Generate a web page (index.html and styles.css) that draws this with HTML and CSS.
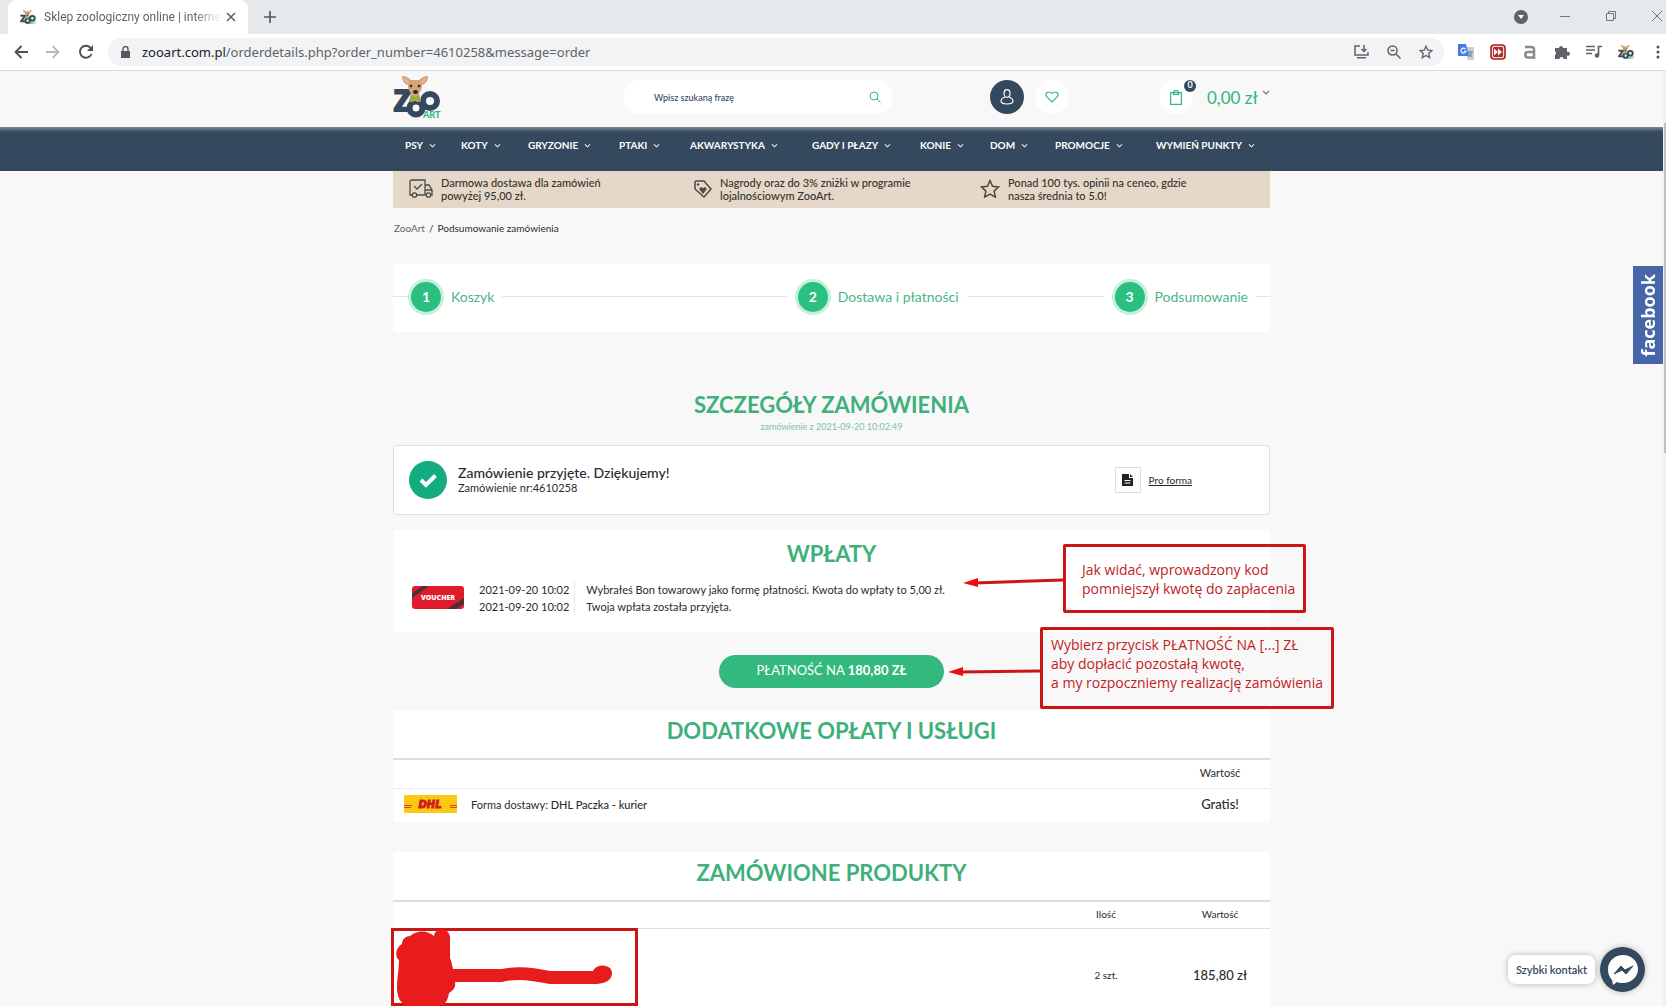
FILE: index.html
```html
<!DOCTYPE html>
<html lang="pl">
<head>
<meta charset="utf-8">
<title>Sklep zoologiczny online | internetowy ZooArt</title>
<link rel="stylesheet" href="styles.css">
</head>
<body>
<svg class="defs" aria-hidden="true">
  <symbol id="logo" viewBox="0 0 48 44">
    <text class="logo-z" x="1" y="36">Z</text>
    <circle cx="37" cy="26" r="7" fill="none" stroke="#34495e" stroke-width="6"/>
    <circle cx="23" cy="33" r="6.500" fill="#f8f8f8" stroke="#34495e" stroke-width="6"/>
    <path d="M9 1c4 0 7 2 9 4h8c2-2 5-4 9-4 0 4-2 8-6 9 0 4-1 6-3 8l2 8H16l2-8c-2-2-3-4-3-8-4-1-6-5-6-9z" fill="#d3a578"/>
    <path d="M11 3c2 0 4 2 5 5-3 0-4-2-5-5zm22 0c-2 0-4 2-5 5 3 0 4-2 5-5z" fill="#e9b9a0"/>
    <circle cx="18" cy="11" r="1.300" fill="#2b2622"/><circle cx="26" cy="11" r="1.300" fill="#2b2622"/>
    <ellipse cx="22.500" cy="17" rx="2.500" ry="2" fill="#2b2622"/>
    <path d="M18 20l4 2 4-2v4l-4 2-4-2z" fill="#8cb82b"/>
    <path d="M16 26l2-3 3 4h-4zm12 0l-2-3-3 4h4z" fill="#bb8a5e"/>
    <text class="logo-art" x="30" y="43">ART</text>
  </symbol>
  <symbol id="chev" viewBox="0 0 8 6"><path d="M1 1l3 3 3-3" fill="none" stroke="currentColor" stroke-width="1.200"/></symbol>
</svg>

<div class="tabstrip">
  <div class="tab">
    <svg class="favicon"><use href="#logo"/></svg>
    <span class="tab-title">Sklep zoologiczny online | interne</span>
    <button class="icon-btn" aria-label="Zamknij kartę"><svg width="10" height="10" viewBox="0 0 10 10"><path d="M1 1l8 8M9 1L1 9" stroke="#5f6368" stroke-width="1.600"/></svg></button>
  </div>
  <button class="icon-btn new-tab" aria-label="Nowa karta"><svg width="12" height="12" viewBox="0 0 12 12"><path d="M6 0v12M0 6h12" stroke="#55595d" stroke-width="1.700"/></svg></button>
  <div class="window-controls">
    <svg class="tab-search" width="14" height="14" viewBox="0 0 14 14"><circle cx="7" cy="7" r="7" fill="#5f6368"/><path d="M4 5h6l-3 4z" fill="#fff"/></svg>
    <button class="icon-btn" aria-label="Minimalizuj"><svg width="10" height="10" viewBox="0 0 10 10"><path d="M0 5.500h10" stroke="#777"/></svg></button>
    <button class="icon-btn" aria-label="Przywróć"><svg width="10" height="10" viewBox="0 0 10 10"><path d="M.5 2.500h7v7h-7zM2.500 2.500v-2h7v7h-2" fill="none" stroke="#777"/></svg></button>
    <button class="icon-btn" aria-label="Zamknij"><svg width="10" height="10" viewBox="0 0 10 10"><path d="M0 0l10 10M10 0L0 10" stroke="#777"/></svg></button>
  </div>
</div>

<div class="toolbar">
  <div class="history">
    <button class="icon-btn" aria-label="Wstecz"><svg width="14" height="14" viewBox="0 0 14 14"><path d="M14 7H2M7.500 1L1.500 7l6 6" fill="none" stroke="#4d5156" stroke-width="1.800"/></svg></button>
    <button class="icon-btn" aria-label="Dalej"><svg width="14" height="14" viewBox="0 0 14 14"><path d="M0 7h12M6.500 1l6 6-6 6" fill="none" stroke="#b6b8ba" stroke-width="1.800"/></svg></button>
    <button class="icon-btn" aria-label="Odśwież"><svg width="16" height="16" viewBox="0 0 16 16"><path d="M13.500 10A6 6 0 1 1 12.500 3.800" fill="none" stroke="#4d5156" stroke-width="1.900"/><path d="M15 1v6H9z" fill="#4d5156"/></svg></button>
  </div>
  <div class="omnibox">
    <svg width="9" height="12" viewBox="0 0 9 12"><path d="M0 5h9v7H0z" fill="#55595d"/><path d="M2 5V3a2.500 2.500 0 0 1 5 0v2" fill="none" stroke="#55595d" stroke-width="1.400"/></svg>
    <span class="url"><span class="host">zooart.com.pl</span>/orderdetails.php?order_number=4610258&amp;message=order</span>
    <span class="omni-icons">
      <svg width="15" height="14" viewBox="0 0 15 14"><path d="M6 1H1v9h13V7M10 0v6M7.500 4L10 6.500 12.500 4" fill="none" stroke="#5f6368" stroke-width="1.500"/><path d="M3 12h9v1.500H3z" fill="#5f6368"/></svg>
      <svg width="14" height="14" viewBox="0 0 14 14"><circle cx="5.500" cy="5.500" r="4.500" fill="none" stroke="#5f6368" stroke-width="1.500"/><path d="M9 9l4.500 4.500M3.500 5.500h4" stroke="#5f6368" stroke-width="1.500"/></svg>
      <svg width="14" height="14" viewBox="0 0 14 14"><path d="M7 1.200l1.700 4 4.300.4-3.300 2.800 1 4.200L7 10.400l-3.700 2.200 1-4.200L1 5.600l4.300-.4z" fill="none" stroke="#5f6368" stroke-width="1.300"/></svg>
    </span>
  </div>
  <div class="extensions">
    <svg viewBox="0 0 16 16"><path d="M6 3h9a1 1 0 0 1 1 1v11a1 1 0 0 1-1 1h-5z" fill="#c9ccd1"/><path d="M0 0h8l3 12H1a1 1 0 0 1-1-1z" fill="#3f7de0"/><path d="M7.500 5A2.500 2.500 0 1 0 8 7H5.800" fill="none" stroke="#fff" stroke-width="1.200"/><path d="M10 8h5M12.500 7v1M11 9l3 4M14 9l-3.500 4" stroke="#5f7fa8"/></svg>
    <svg viewBox="0 0 16 16"><rect x="1" y="1" width="14" height="14" rx="3" fill="#f6dcdc" stroke="#a32323" stroke-width="1.600"/><rect x="3" y="3" width="10" height="10" rx="1" fill="#b52b2b"/><path d="M4 4.500L8 8l-4 3.500zM8 4.500L12 8l-4 3.500z" fill="#fff"/></svg>
    <svg viewBox="-1 -1 16 16"><path d="M2 2h6.500a2.500 2.500 0 0 1 2.500 2.500V14M11 7H5a2.700 2.700 0 0 0 0 5.500h6" fill="none" stroke="#8b8b8b" stroke-width="2.600"/></svg>
    <svg viewBox="-1 -1 16 16"><path d="M0 3h4a2 2 0 1 1 4 0h4v4a2 2 0 1 1 0 3.500V14H8.500a2 2 0 0 0-4 0H0v-4a2 2 0 0 0 0-3.500z" fill="#5f6368"/></svg>
    <svg viewBox="0 -1 16 16"><path d="M0 1.500h9M0 5h9M0 8.500h6M16 1.500h-3.500V10" fill="none" stroke="#5f6368" stroke-width="1.700"/><circle cx="11" cy="10.500" r="2.300" fill="#5f6368"/></svg>
    <svg><use href="#logo"/></svg>
    <svg viewBox="-6 -1 16 16"><circle cx="2" cy="2" r="1.500" fill="#4d5156"/><circle cx="2" cy="7" r="1.500" fill="#4d5156"/><circle cx="2" cy="12" r="1.500" fill="#4d5156"/></svg>
  </div>
</div>

<div class="viewport">
<div class="page">
  <header class="site-header">
    <div class="container header-row">
      <a href="#" class="logo-link" aria-label="ZooArt"><svg width="48" height="44"><use href="#logo"/></svg></a>
      <form class="search">
        <input type="search" placeholder="Wpisz szukaną frazę" aria-label="Wpisz szukaną frazę">
        <button type="button" class="icon-btn" aria-label="Szukaj"><svg width="12" height="12" viewBox="0 0 12 12"><circle cx="5" cy="5" r="4" fill="none" stroke="#2fb77c"/><path d="M8 8l3.500 3.500" stroke="#2fb77c"/></svg></button>
      </form>
      <a href="#" class="round dark account" aria-label="Konto"><svg width="14" height="16" viewBox="0 0 14 16"><ellipse cx="7" cy="4.500" rx="3" ry="3.800" fill="none" stroke="#fff" stroke-width="1.200"/><path d="M5 8c-2.500 1-4 2-4 4 0 2 2.500 3 6 3s6-1 6-3c0-2-1.500-3-4-4" fill="none" stroke="#fff" stroke-width="1.200"/></svg></a>
      <a href="#" class="round" aria-label="Ulubione"><svg width="14" height="12" viewBox="0 0 14 12"><path d="M7 11L1.500 5.500C-.5 2.500 3.500-1 7 2.500c3.500-3.500 7.500 0 5.500 3z" fill="none" stroke="#2fb77c" stroke-width="1.100"/></svg></a>
      <a href="#" class="round cart" aria-label="Koszyk"><svg width="12" height="15" viewBox="0 0 12 15"><path d="M.6 2.600h10.800v11.800H.6z" fill="none" stroke="#2fb77c" stroke-width="1.200"/><path d="M3.500 4.500v-2a2.500 2 0 0 1 5 0v2z" fill="none" stroke="#2fb77c" stroke-width="1.200"/></svg><span class="badge">0</span></a>
      <span class="price">0,00 zł</span>
      <svg class="price-chev" width="8" height="6"><use href="#chev"/></svg>
    </div>
  </header>
  <nav class="main-nav">
    <ul class="container">
      <li><a href="#">PSY <svg><use href="#chev"/></svg></a></li>
      <li><a href="#">KOTY <svg><use href="#chev"/></svg></a></li>
      <li><a href="#">GRYZONIE <svg><use href="#chev"/></svg></a></li>
      <li><a href="#">PTAKI <svg><use href="#chev"/></svg></a></li>
      <li><a href="#">AKWARYSTYKA <svg><use href="#chev"/></svg></a></li>
      <li><a href="#">GADY I PŁAZY <svg><use href="#chev"/></svg></a></li>
      <li><a href="#">KONIE <svg><use href="#chev"/></svg></a></li>
      <li><a href="#">DOM <svg><use href="#chev"/></svg></a></li>
      <li><a href="#">PROMOCJE <svg><use href="#chev"/></svg></a></li>
      <li><a href="#">WYMIEŃ PUNKTY <svg><use href="#chev"/></svg></a></li>
    </ul>
  </nav>

  <main class="container">
    <div class="benefits">
      <div class="benefit"><svg width="24" height="19" viewBox="0 0 24 19"><path d="M3 16H1V3a2 2 0 0 1 2-2h13v15H8M16 6h4l3 5v5h-1M16 11h7M5 7l3 3 5-5" fill="none" stroke="#4a4a45" stroke-width="1.300"/><circle cx="5.500" cy="16" r="2.200" fill="none" stroke="#4a4a45" stroke-width="1.300"/><circle cx="19.500" cy="16" r="2.200" fill="none" stroke="#4a4a45" stroke-width="1.300"/></svg><span>Darmowa dostawa dla zamówień<br>powyżej 95,00 zł.</span></div>
      <div class="benefit"><svg width="18" height="18" viewBox="0 0 18 18"><path d="M1 2a1 1 0 0 1 1-1h8l7 8-7 8-9-8z" fill="none" stroke="#4a4a45" stroke-width="1.500"/><circle cx="4" cy="4.500" r="1.200" fill="#4a4a45"/><path d="M9 14L5.500 9.500C5 7 8 6.500 9 8.500c1-2 4-1.500 3.500 1z" fill="#4a4a45"/></svg><span>Nagrody oraz do 3% zniżki w programie<br>lojalnościowym ZooArt.</span></div>
      <div class="benefit"><svg width="20" height="19" viewBox="0 0 20 19"><path d="M10 1.500l2.600 5.700 6 .7-4.500 4.200 1.300 6L10 15l-5.400 3.100 1.300-6L1.400 7.900l6-.7z" fill="none" stroke="#4a4a45" stroke-width="1.500"/></svg><span>Ponad 100 tys. opinii na ceneo, gdzie<br>nasza średnia to 5.0!</span></div>
    </div>

    <div class="breadcrumb"><a href="#">ZooArt</a><span>/</span><span>Podsumowanie zamówienia</span></div>

    <ol class="steps card">
      <li class="step"><span class="num">1</span>Koszyk</li>
      <li class="step grow-a"><span class="num">2</span>Dostawa i płatności</li>
      <li class="step grow-b"><span class="num">3</span>Podsumowanie</li>
    </ol>

    <h1>SZCZEGÓŁY ZAMÓWIENIA</h1>
    <p class="order-date">zamówienie z 2021-09-20 10:02:49</p>

    <section class="order card">
      <svg width="38" height="38" viewBox="0 0 38 38"><circle cx="19" cy="19" r="19" fill="#15ab80"/><path d="M12 19l5 5 9.500-9.500" fill="none" stroke="#fff" stroke-width="4"/></svg>
      <div class="order-text"><strong>Zamówienie przyjęte. Dziękujemy!</strong><span>Zamówienie nr:4610258</span></div>
      <a href="#" class="proforma"><span class="doc"><svg width="11" height="12" viewBox="0 0 11 12"><path d="M0 0h7v4h4v8H0z" fill="#222"/><path d="M8 0l3 3H8z" fill="#222"/><path d="M2.500 6.500h6M2.500 9h6" stroke="#fff"/></svg></span><span class="proforma-label">Pro forma</span></a>
    </section>

    <section class="payments card">
      <h2>WPŁATY</h2>
      <div class="payment-row">
        <svg class="voucher" width="52" height="23" viewBox="0 0 52 23"><defs><clipPath id="vc"><rect width="52" height="23" rx="3"/></clipPath></defs><g clip-path="url(#vc)"><rect width="52" height="23" fill="#e01b2d"/><path d="M0 7L11 0h6L0 12zM35 23L52 12v6l-8 5z" fill="#4a3234"/></g><text x="26" y="14" text-anchor="middle" class="voucher-text">VOUCHER</text></svg>
        <div class="dates">2021-09-20 10:02<br>2021-09-20 10:02</div>
        <div class="messages">Wybrałeś Bon towarowy jako formę płatności. Kwota do wpłaty to 5,00 zł.<br>Twoja wpłata została przyjęta.</div>
      </div>
    </section>

    <button class="pay">PŁATNOŚĆ NA <b>180,80 ZŁ</b></button>

    <section class="card extras">
      <h2>DODATKOWE OPŁATY I USŁUGI</h2>
      <table>
        <thead><tr><th></th><th class="col-value">Wartość</th></tr></thead>
        <tbody><tr>
          <td><div class="delivery"><svg width="53" height="18" viewBox="0 0 53 18"><rect width="53" height="18" fill="#fbc911"/><path d="M0 10.500h8M0 12.500h7M46 10.500h7M46 12.500h7" stroke="#d8451b"/><text x="26" y="13" text-anchor="middle" class="dhl-text">DHL</text></svg><span>Forma dostawy: <b>DHL Paczka - kurier</b></span></div></td>
          <td class="col-value amount">Gratis!</td>
        </tr></tbody>
      </table>
    </section>

    <section class="card products">
      <h2>ZAMÓWIONE PRODUKTY</h2>
      <table>
        <thead><tr><th></th><th class="col-qty">Ilość</th><th class="col-value">Wartość</th></tr></thead>
        <tbody><tr>
          <td class="product-cell"><svg class="redacted" width="247" height="79" viewBox="0 0 247 79"><rect x="1.500" y="1.500" width="244" height="75" fill="none" stroke="#cb1616" stroke-width="3"/><path d="M8 32C4 29 4 20 11 16c0-5 4-8 8-8 7-6 17-6 24 0 1-9 15-9 16 1v21c2 5 2 7 3 11h49c14-3 30-2 48 2h43c5-9 20-6 19 3-1 8-10 10-18 10h-44c-18-3-32-6-48-2H64c1 5-1 8-6 11-1 7-4 12-9 13H20C9 78 6 68 6 59c0-9 2-18 2-27z" fill="#e81c1c"/></svg></td>
          <td class="col-qty">2 szt.</td>
          <td class="col-value amount">185,80 zł</td>
        </tr></tbody>
      </table>
    </section>

    <div class="note note-code">
      <svg width="100" height="12" viewBox="0 0 100 12"><path d="M12 8L100 5" stroke="#cb1616" stroke-width="3"/><path d="M0 8l15-5v9z" fill="#ee0d0d"/></svg>
      <p>Jak widać, wprowadzony kod<br>pomniejszył kwotę do zapłacenia</p>
    </div>
    <div class="note note-pay">
      <svg width="92" height="12" viewBox="0 0 92 12"><path d="M12 7L92 6" stroke="#cb1616" stroke-width="3"/><path d="M0 7l15-5v9z" fill="#ee0d0d"/></svg>
      <p>Wybierz przycisk PŁATNOŚĆ NA [...] ZŁ<br>aby dopłacić pozostałą kwotę,<br>a my rozpoczniemy realizację zamówienia</p>
    </div>
  </main>

  <a href="#" class="facebook"><span>facebook</span></a>
  <div class="chat">
    <span class="chat-label">Szybki kontakt</span>
    <button class="chat-btn" aria-label="Szybki kontakt"><svg width="30" height="32" viewBox="0 0 30 32"><path d="M15 1c8 0 15 6 15 14s-7 14-15 14c-2 0-4 0-6-1l-4 3-1-5C1 23 0 19 0 15 0 7 7 1 15 1z" fill="#fff"/><path d="M6 20l7-8 4 4 8-4-7 8-4-4z" fill="#34495e" stroke="#34495e"/></svg></button>
  </div>
</div>
<div class="scrollbar"><div class="thumb"></div></div>
</div>
</body>
</html>
```

FILE: styles.css
```css
* { box-sizing: border-box; }
body {
  margin: 0;
  height: 100vh;
  display: flex;
  flex-direction: column;
  overflow: hidden;
  background: #f8f8f8;
  color: #2b2b2b;
  font: 11px/17px Lato, "Liberation Sans", sans-serif;
}
button, input { font: inherit; color: inherit; }
a { color: inherit; text-decoration: none; }
svg { display: block; flex: none; }
.defs { display: none; }
.logo-z { font: 900 28px Lato, sans-serif; fill: #34495e; stroke: #34495e; stroke-width: 2px; }
.logo-art { font: 900 9px Lato, sans-serif; fill: #2fb77c; }
.icon-btn { display: flex; padding: 0; border: 0; background: none; }

/* browser window */
.tabstrip { display: flex; align-items: center; height: 34px; padding-left: 8px; background: #e5e9eb; }
.tab {
  display: flex;
  align-items: center;
  width: 240px;
  height: 34px;
  padding: 0 12px;
  background: #fff;
  border-radius: 8px 8px 0 0;
}
.favicon { width: 16px; height: 16px; }
.tab-title {
  flex: 1;
  margin: 0 5px 0 8px;
  white-space: nowrap;
  font: 12px/16px Roboto, sans-serif;
  color: #5f6368;
  -webkit-mask-image: linear-gradient(90deg, #000 85%, transparent);
  mask-image: linear-gradient(90deg, #000 85%, transparent);
}
.new-tab { margin-left: 16px; }
.window-controls { display: flex; align-items: center; gap: 36px; margin-left: auto; padding-right: 4px; }
.window-controls svg { margin-bottom: 2px; }
.window-controls .tab-search { margin: 0 -4px 0 0; }
.toolbar {
  display: flex;
  align-items: center;
  gap: 14px;
  height: 37px;
  padding-left: 14px;
  background: #fff;
  border-bottom: 1px solid #d9dbdd;
}
.history { display: flex; align-items: center; gap: 18px; }
.omnibox {
  flex: 1;
  display: flex;
  align-items: center;
  gap: 12px;
  height: 28px;
  padding: 0 11px 0 13px;
  border-radius: 14px;
  background: #f1f3f4;
}
.url { flex: 1; font: 13px/20px "Noto Sans", sans-serif; color: #5f6368; }
.host { color: #202124; }
.omni-icons { display: flex; gap: 18px; }
.extensions { display: flex; align-items: center; gap: 16px; }
.extensions svg { width: 16px; height: 16px; }

/* shop page */
.viewport { flex: 1; display: flex; min-height: 0; }
.page { position: relative; flex: 1; overflow: hidden; }
.scrollbar { width: 3px; padding-top: 52px; background: #f1f1f1; }
.thumb { height: 330px; margin-left: 1px; background: #c1c1c1; }
.container { position: relative; width: 100%; max-width: 877px; margin: 0 auto; }

.header-row { display: flex; align-items: center; height: 56px; padding-bottom: 4px; }
.logo-link { width: 230px; }
.search {
  display: flex;
  align-items: center;
  width: 270px;
  height: 34px;
  padding: 0 12px 0 31px;
  border-radius: 17px;
  background: #fff;
}
.search input { flex: 1; min-width: 0; padding: 0; border: 0; outline: 0; background: none; font-size: 9px; font-weight: 500; color: #34495e; }
.search input::placeholder { color: #34495e; opacity: 1; }
.round { position: relative; display: flex; align-items: center; justify-content: center; width: 34px; height: 34px; border-radius: 50%; background: #fff; }
.dark { background: #34495e; }
.account { margin: 0 11px 0 97px; }
.cart { margin-left: 90px; }
.badge {
  position: absolute;
  top: 0;
  right: -3px;
  width: 12px;
  height: 12px;
  border-radius: 50%;
  background: #34495e;
  color: #fff;
  font: 700 9px/10px Lato, sans-serif;
  text-align: center;
}
.price { margin-left: 14px; font-size: 17px; color: #2fb77c; }
.price-chev { margin: 0 0 8px auto; color: #777; }

.main-nav { height: 44px; background: linear-gradient(#7c8997, #34495e 5px); }
.main-nav ul {
  display: grid;
  grid-template-columns: 56fr 67fr 91fr 71fr 122fr 108fr 70fr 65fr 101fr 114fr;
  padding: 10px 0 0 12px;
  list-style: none;
}
.main-nav a { display: flex; align-items: center; gap: 6px; color: #fff; font-weight: 700; font-size: 10px; white-space: nowrap; }
.main-nav svg { width: 7px; height: 6px; }

.benefits {
  display: grid;
  grid-template-columns: 285fr 286fr 290fr;
  align-items: center;
  height: 37px;
  padding: 0 0 2px 16px;
  background: #e6d8c8;
}
.benefit { display: flex; align-items: center; gap: 8px; font-size: 11px; line-height: 13px; font-weight: 500; color: #33332f; }

.breadcrumb { display: flex; gap: 4px; padding: 12px 0 0 1px; height: 56px; font-size: 10px; }
.breadcrumb a { color: #666; }

.card { background: #fff; border-radius: 4px; }
.steps { display: flex; height: 68px; margin: 0; padding: 0 0 3px; list-style: none; }
.step { display: flex; align-items: center; font-size: 14px; color: #4bb586; white-space: nowrap; }
.step::before { content: ""; height: 1px; width: 15px; background: #e4e6e6; }
.step::after { content: ""; width: 8px; }
.step:last-child::after { height: 1px; width: 15px; margin-left: 7px; background: #e4e6e6; }
.grow-a { flex: 285 1 auto; }
.grow-b { flex: 129 1 auto; }
.grow-a::before, .grow-b::before { flex: 1; margin-right: 8px; }
.num {
  width: 36px;
  height: 36px;
  margin-right: 7px;
  border: 3px solid #c5f1dc;
  border-radius: 50%;
  background: #2bc07f;
  color: #fff;
  font-weight: 700;
  line-height: 29px;
  text-align: center;
}

h1, h2 { margin: 0; color: #3fb07b; font-size: 22px; line-height: 28px; font-weight: 700; text-align: center; }
h1 { margin-top: 59px; }
.order-date { margin: 0; padding: 0 0 11px; font-size: 9px; line-height: 15px; color: #7cc4a0; text-align: center; }

.order { display: flex; align-items: center; height: 70px; padding: 0 77px 0 15px; border: 1px solid #dcdedf; }
.order-text { display: flex; flex-direction: column; margin-left: 11px; line-height: 15px; }
.order-text strong { font-size: 14px; font-weight: 500; }
.proforma { display: flex; align-items: center; gap: 8px; margin-left: auto; font-size: 10px; }
.doc { display: flex; align-items: center; justify-content: center; width: 26px; height: 26px; border: 1px solid #dcdedf; }
.proforma-label { text-decoration: underline; }

.payments { height: 102px; margin-top: 15px; padding-top: 10px; }
.payment-row { display: flex; align-items: center; margin-top: 13px; padding-left: 19px; }
.voucher { margin-bottom: 2px; }
.voucher-text { font: 900 7px "Open Sans", sans-serif; fill: #fff; }
.dates { margin-left: 15px; padding-right: 5px; border-right: 1px solid #e8e8e8; }
.messages { margin-left: 11px; }

.pay {
  display: block;
  width: 225px;
  height: 33px;
  margin: 23px auto 22px;
  padding: 0 0 3px;
  border: 0;
  border-radius: 17px;
  background: #33b97d;
  color: #fff;
  font-size: 13px;
}

.extras { height: 112px; padding-top: 7px; }
.products { height: 190px; margin-top: 30px; padding-top: 7px; }
table { width: 100%; margin-top: 13px; border-collapse: collapse; border-top: 2px solid #dddfdf; table-layout: fixed; }
th { height: 29px; padding: 0 0 2px; font-weight: 400; }
thead { border-bottom: 1px solid #ececec; }
td { padding: 0 0 2px; }
.extras td { height: 34px; }
.products th { height: 27px; padding: 0; font-size: 10px; }
.products thead { border-color: #dcdedf; }
.products td { height: 94px; padding: 0; font-size: 10px; }
.col-value { width: 100px; text-align: center; }
.col-qty { width: 128px; text-align: center; }
.products .amount, .amount { font-size: 13px; font-weight: 500; }
.delivery { display: flex; align-items: center; gap: 14px; padding-left: 11px; }
.delivery b { font-weight: 500; }
.dhl-text { font: oblique 700 10px "DejaVu Sans", sans-serif; fill: #cf1c1c; stroke: #cf1c1c; }
.products .product-cell { position: relative; }
.redacted { position: absolute; top: -1px; left: -2px; }

/* red call-outs drawn over the order page */
.note { position: absolute; display: flex; font: 14px/19px "Open Sans", sans-serif; color: #c01c24; white-space: nowrap; }
.note p { margin: 0; border: 3px solid #cb1616; border-radius: 2px; }
.note-code { top: 373px; left: 570px; }
.note-code svg { margin-top: 31px; }
.note-code p { width: 243px; height: 69px; padding: 13px 0 0 16px; }
.note-pay { top: 456px; left: 555px; }
.note-pay svg { margin-top: 38px; }
.note-pay p { width: 294px; height: 82px; padding: 5px 0 0 8px; }

.facebook {
  position: absolute;
  top: 195px;
  right: 0;
  display: flex;
  align-items: center;
  justify-content: center;
  width: 30px;
  height: 98px;
  background: #4666a8;
  color: #fff;
}
.facebook span { writing-mode: vertical-rl; transform: rotate(180deg); font: 700 18px/20px "Open Sans", sans-serif; }
.chat { position: absolute; right: 18px; bottom: 14px; display: flex; align-items: center; gap: 5px; }
.chat-label { padding: 6px 8px; border-radius: 8px; background: #fff; box-shadow: 0 0 6px #0004; color: #34495e; font-weight: 600; }
.chat-btn { display: flex; align-items: center; justify-content: center; width: 45px; height: 45px; padding: 0; border: 0; border-radius: 50%; background: #34495e; box-shadow: 0 0 6px #0004; }
```
